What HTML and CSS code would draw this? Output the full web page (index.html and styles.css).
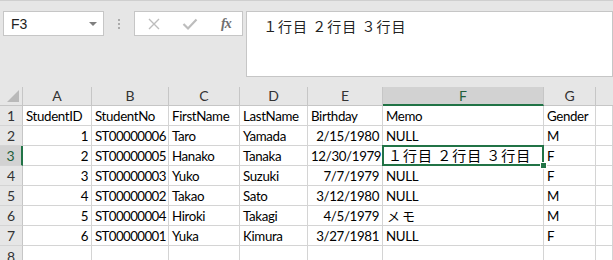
FILE: index.html
```html
<!DOCTYPE html>
<html>
<head>
<meta charset="utf-8">
<link rel="stylesheet" href="styles.css">
</head>
<body>
<div class="toolbar">
  <div class="namebox">
    <span class="nb-text">F3</span>
    <span class="nb-arrow"></span>
  </div>
  <div class="sep"><i></i><i></i><i></i></div>
  <div class="btns">
    <svg class="ico" width="14" height="14" viewBox="0 0 14 14"><path d="M2 2 L12 12 M12 2 L2 12" stroke="#bdbdbd" stroke-width="1.4" fill="none"/></svg>
    <svg class="ico" width="16" height="14" viewBox="0 0 16 14"><path d="M1.5 7 L6 11.5 L14.5 2.5" stroke="#bdbdbd" stroke-width="2.2" fill="none"/></svg>
    <span class="fx">fx</span>
  </div>
  <div class="formula"><span class="ftext">１行目 ２行目 ３行目</span></div>
</div>
<div class="sheet">
  <div class="hd corner"><span class="tri"></span></div>
  <div class="hd">A</div><div class="hd">B</div><div class="hd">C</div><div class="hd">D</div><div class="hd">E</div><div class="hd sel">F</div><div class="hd">G</div><div class="hd last"></div>

  <div class="rh">1</div>
  <div class="c">StudentID</div><div class="c">StudentNo</div><div class="c">FirstName</div><div class="c">LastName</div><div class="c">Birthday</div><div class="c">Memo</div><div class="c">Gender</div><div class="c"></div>

  <div class="rh">2</div>
  <div class="c r">1</div><div class="c num">ST00000006</div><div class="c">Taro</div><div class="c">Yamada</div><div class="c r">2/15/1980</div><div class="c">NULL</div><div class="c">M</div><div class="c"></div>

  <div class="rh rsel">3</div>
  <div class="c r">2</div><div class="c num">ST00000005</div><div class="c">Hanako</div><div class="c">Tanaka</div><div class="c r">12/30/1979</div><div class="c active"><span class="jp">１行目 ２行目 ３行目</span><span class="handle"></span></div><div class="c">F</div><div class="c"></div>

  <div class="rh">4</div>
  <div class="c r">3</div><div class="c num">ST00000003</div><div class="c">Yuko</div><div class="c">Suzuki</div><div class="c r">7/7/1979</div><div class="c">NULL</div><div class="c">F</div><div class="c"></div>

  <div class="rh">5</div>
  <div class="c r">4</div><div class="c num">ST00000002</div><div class="c">Takao</div><div class="c">Sato</div><div class="c r">3/12/1980</div><div class="c">NULL</div><div class="c">M</div><div class="c"></div>

  <div class="rh">6</div>
  <div class="c r">5</div><div class="c num">ST00000004</div><div class="c">Hiroki</div><div class="c">Takagi</div><div class="c r">4/5/1979</div><div class="c"><span class="jp small">メモ</span></div><div class="c">M</div><div class="c"></div>

  <div class="rh">7</div>
  <div class="c r">6</div><div class="c num">ST00000001</div><div class="c">Yuka</div><div class="c">Kimura</div><div class="c r">3/27/1981</div><div class="c">NULL</div><div class="c">F</div><div class="c"></div>

  <div class="rh rlast">8</div>
  <div class="c"></div><div class="c"></div><div class="c"></div><div class="c"></div><div class="c"></div><div class="c"></div><div class="c"></div><div class="c"></div>
</div>
</body>
</html>
```
FILE: styles.css
```css
* { box-sizing: border-box; }
html, body { margin: 0; padding: 0; }
body {
  width: 613px;
  height: 260px;
  overflow: hidden;
  background: #e6e6e6;
  font-family: "Lato", "Liberation Sans", sans-serif;
}
.toolbar {
  height: 87px;
  border-top: 1px solid #cfcfcf;
  padding-top: 10px;
  display: flex;
  align-items: flex-start;
}
.namebox {
  margin-left: 3px;
  width: 102px;
  height: 25px;
  background: #fff;
  border: 1px solid #c6c6c6;
  display: flex;
  align-items: center;
  justify-content: space-between;
  padding: 0 6px 0 7px;
}
.nb-text { font-size: 14px; color: #222; font-family: "Liberation Sans", sans-serif; }
.nb-arrow {
  width: 0; height: 0;
  border-left: 4px solid transparent;
  border-right: 4px solid transparent;
  border-top: 4px solid #7f7f7f;
}
.sep {
  width: 30px;
  height: 25px;
  display: flex;
  flex-direction: column;
  align-items: center;
  justify-content: center;
  gap: 2px;
}
.sep i { display: block; width: 2px; height: 2px; background: #ababab; }
.btns {
  width: 110px;
  height: 25px;
  background: #fff;
  border: 1px solid #c6c6c6;
  display: flex;
  align-items: center;
  padding-left: 12px;
  gap: 21px;
}
.fx {
  font-family: "Liberation Serif", serif;
  font-style: italic;
  font-weight: bold;
  font-size: 14px;
  color: #6f6f6f;
  margin-left: 2px;
  letter-spacing: -1px;
}
.formula {
  margin-left: 3px;
  width: 370px;
  height: 66px;
  background: #fff;
  border: 1px solid #c6c6c6;
  padding: 4px 0 0 16px;
}
.ftext, .jp {
  font-family: "Noto Sans CJK JP", sans-serif;
  font-size: 14px;
  color: #222;
  letter-spacing: 1px;
}
.sheet {
  display: grid;
  grid-template-columns: 23px 69px 77px 71px 68px 75px 161px 52px 17px;
  grid-template-rows: 19px repeat(8, 20px);
  background: #fff;
}
.hd {
  background: #e6e6e6;
  border-right: 1px solid #c6c6c6;
  border-bottom: 1px solid #c6c6c6;
  text-align: center;
  font-size: 14px;
  line-height: 18px;
  color: #333;
}
.hd.last { border-right: none; }
.hd.sel {
  background: #d2d2d2;
  color: #1f5e3b;
  border-bottom: 2px solid #217346;
}
.corner { position: relative; }
.tri {
  position: absolute;
  right: 3px;
  bottom: 3px;
  width: 0; height: 0;
  border-left: 12px solid transparent;
  border-bottom: 12px solid #b9b9b9;
}
.rh {
  background: #e6e6e6;
  border-right: 1px solid #c6c6c6;
  border-bottom: 1px solid #d4d4d4;
  text-align: center;
  font-size: 14px;
  line-height: 20px;
  color: #333;
}
.rh.rlast { line-height: 22px; }
.rh.rsel {
  background: #d2d2d2;
  color: #1f5e3b;
  border-right: 2px solid #217346;
}
.c {
  border-right: 1px solid #d4d4d4;
  border-bottom: 1px solid #d4d4d4;
  font-size: 13.3px;
  letter-spacing: -0.35px;
  line-height: 20px;
  padding: 0 3px 0 3px;
  color: #000;
  white-space: nowrap;
  overflow: visible;
}
.c.num { letter-spacing: -0.6px; }
.c.r { text-align: right; }
.c.active { position: relative; padding-left: 5px; }
.c.active::after {
  content: "";
  position: absolute;
  left: -1px; top: -1px; right: -1px; bottom: -1px;
  border: 2px solid #217346;
}
.jp { color: #000; font-size: 14px; line-height: 19px; letter-spacing: 1px; }
.jp.small { font-size: 13px; margin-left: 1px; letter-spacing: 2px; }
.handle {
  position: absolute;
  right: -4px;
  bottom: -4px;
  width: 7px;
  height: 7px;
  background: #217346;
  border: 1px solid #fff;
  z-index: 2;
}
```
